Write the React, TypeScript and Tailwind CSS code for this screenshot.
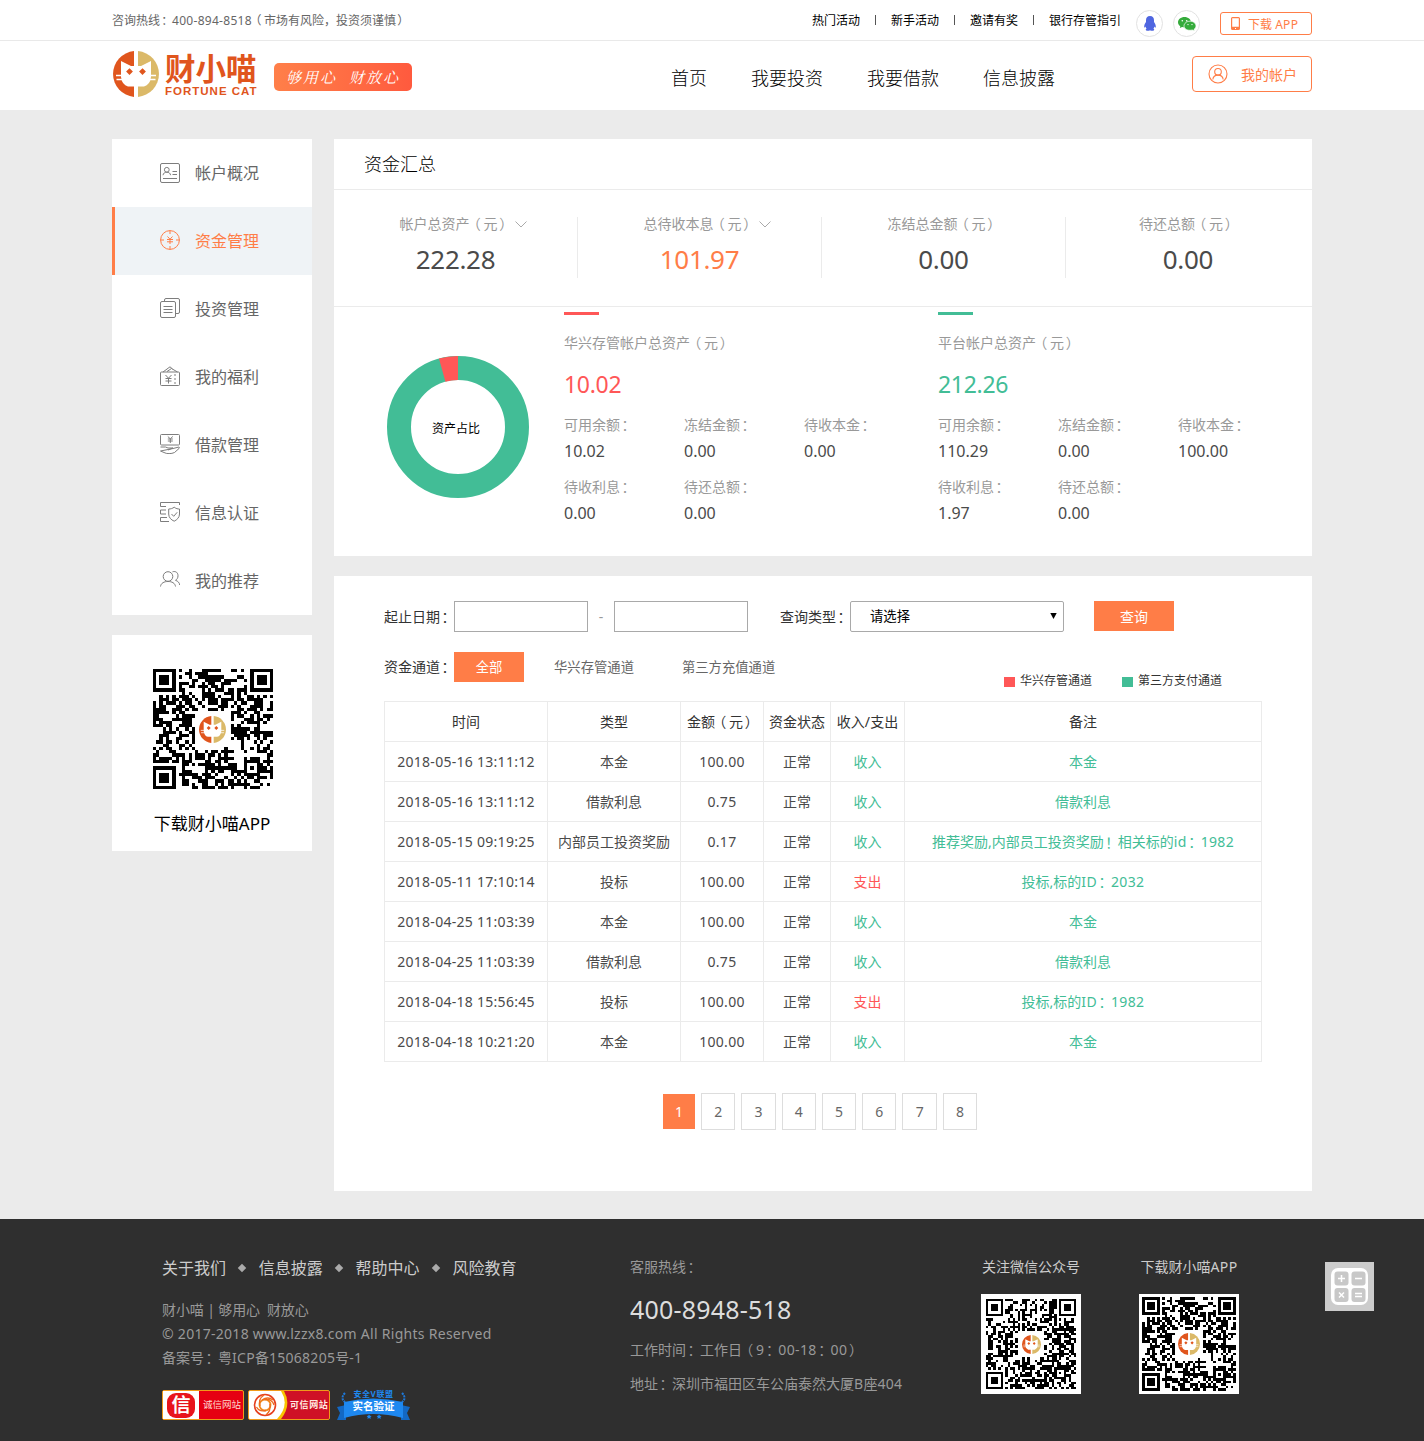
import React from "react";

const LATIN = /([A-Za-z0-9.©\-:\/][A-Za-z0-9.©\-:\/ ]*|[：！（）])/;

/* Mixed-script text: centred full-width punctuation and slightly tracked latin runs. */
function T({ children, tight = false }: { children: string; tight?: boolean }) {
  return (
    <>
      {children.split(LATIN).map((part, i) => {
        if (i % 2 === 0) return part;
        if (/[：！]/.test(part))
          return (
            <span
              key={i}
              className="inline-block h-[1em] -translate-x-[0.14em] translate-y-[0.06em] font-['Noto_Sans_CJK_TC','Noto_Sans_CJK_SC',sans-serif] leading-[1em]"
            >
              {part}
            </span>
          );
        if (part === "（")
          return (
            <span key={i} className="inline-block -translate-x-[0.2em] leading-[1em]">
              {part}
            </span>
          );
        if (part === "）")
          return (
            <span key={i} className="inline-block translate-x-[0.12em] leading-[1em]">
              {part}
            </span>
          );
        return (
          <span key={i} className={tight ? "tracking-[0.020em]" : "tracking-[0.024em]"}>
            {part}
          </span>
        );
      })}
    </>
  );
}

function CatMark({ className }: { className: string }) {
  return (
    <svg viewBox="0 0 46 46" className={className}>
      <path d="M21 0.090A23 23 0 0 0 21 45.910Z" fill="#e0551d" />
      <path d="M25 0.090A23 23 0 0 1 25 45.910Z" fill="#dbb968" />
      <path d="M8 10L18 15H28L38 10V26Q37 34 31 35.500H15Q9 34 8 26Z" fill="#fff" />
      <path d="M3 24.500H9M3.500 28.500H10M37 24.500H43M36 28.500H42.500" stroke="#fff" strokeWidth="1.300" />
      <path d="M16.500 17.200l3.400 3.400-3.400 3.400-3.400-3.400zM29.500 17.200l3.400 3.400-3.400 3.400-3.400-3.400z" fill="#e0551d" />
    </svg>
  );
}

const N = 37;
function buildQr(seed: number) {
  let s = seed;
  const rand = () => {
    s = (s * 1103515245 + 12345) % 2147483648;
    return s / 2147483648;
  };
  const ring = (x: number, y: number, cx: number, cy: number) => Math.max(Math.abs(x - cx), Math.abs(y - cy));
  let d = "";
  for (let y = 0; y < N; y++) {
    for (let x = 0; x < N; x++) {
      let on = rand() < 0.53;
      for (const [cx, cy] of [[3, 3], [N - 4, 3], [3, N - 4]]) {
        const r = ring(x, y, cx, cy);
        if (r <= 4) on = r <= 1 || r === 3;
      }
      const a = ring(x, y, N - 7, N - 7);
      if (a <= 2) on = a !== 1;
      if (x > 12 && x < 24 && y > 12 && y < 24) on = false;
      if (on) d += `M${x} ${y}h1v1h-1z`;
    }
  }
  return d;
}

function Qr({ seed, className, markClass }: { seed: number; className: string; markClass: string }) {
  return (
    <div className={`relative flex items-center justify-center bg-white ${className}`}>
      <svg viewBox={`0 0 ${N} ${N}`} className="h-full w-full" shapeRendering="crispEdges">
        <path d={buildQr(seed)} fill="#000" />
      </svg>
      <CatMark className={`absolute ${markClass}`} />
    </div>
  );
}

const menu: { label: string; icon: React.ReactNode }[] = [
  {
    label: "帐户概况",
    icon: (
      <>
        <rect x="0.5" y="0.5" width="19" height="19" rx="1.5" />
        <circle cx="6.8" cy="6.8" r="2.4" />
        <path d="M3 12.2c.3-2 1.8-3 3.8-3s3.500 1 3.800 3M12.500 8.500H17M12.500 11.500H17M3 15.500H17" />
      </>
    ),
  },
  {
    label: "资金管理",
    icon: (
      <>
        <circle cx="10" cy="10" r="9.400" />
        <path d="M10 .6V4M10 16v3.400M.6 10H4M16 10h3.400M7.500 6.500L10 9.200l2.500-2.700M10 9.200V14M7 9.500h6M7 11.800h6" />
      </>
    ),
  },
  {
    label: "投资管理",
    icon: (
      <>
        <path d="M4.500 3.500V2A1.500 1.500 0 0 1 6 .5H18A1.500 1.500 0 0 1 19.500 2V14A1.500 1.500 0 0 1 18 15.500H15.500" />
        <rect x="0.5" y="3.5" width="15" height="16" rx="1.5" />
        <path d="M3.500 8.500H12.500M3.500 11.500H12.500M3.500 14.500H12.500" />
      </>
    ),
  },
  {
    label: "我的福利",
    icon: (
      <>
        <rect x="0.5" y="6" width="19" height="13.500" rx="1" />
        <path d="M3 6L10 .8 12.500 3M7 5.500l4.500-3 6 3.500M15 8v2M15 12v2M15 16v2M5.500 9L8.500 12.200 11.500 9M8.500 12.200V17.500M5.500 12.500h6M5.500 15h6" />
      </>
    ),
  },
  {
    label: "借款管理",
    icon: (
      <>
        <rect x="0.5" y="0.5" width="19" height="10.500" rx="1" />
        <path d="M7.800 2.500L10.300 4.800 12.800 2.500M10.300 4.800V9M7.800 5h5M7.800 7h5M.5 13H5.500L8 14H13L8 16M13 14.500l6-1.500c.8.400.5.900 0 1.500L14.500 18.500c-3 1.500-8 1.500-10.500 0L.5 17Z" />
      </>
    ),
  },
  {
    label: "信息认证",
    icon: (
      <>
        <path d="M19.500 3V.5H.5V4.500H6M6 8H.5V12H6M7 15.500H.5V19.500H9M14.200 5.200c2 1.500 3.500 1.800 5.300 1.800v5c0 3.500-2.500 5.800-5.300 7.200C11 17.800 8.700 15.500 8.700 12V7c2 0 3.800-.5 5.500-1.800ZM11.500 12l2.200 2.300 3.500-4" />
      </>
    ),
  },
  {
    label: "我的推荐",
    icon: (
      <>
        <circle cx="8" cy="6.500" r="4.800" />
        <path d="M.5 16.500c.5-3.500 3.500-5 7.500-5s7 1.500 7.500 5M12.500 1.800c3.500-1 5.500 1 5.500 4 0 2-1 3.700-2.500 4.500 2.500.8 4 2.500 4.200 4.700" />
      </>
    ),
  },
];

const stats = [
  { label: "帐户总资产（元）", value: "222.28", arrow: true, color: "text-[#4a4a4a]" },
  { label: "总待收本息（元）", value: "101.97", arrow: true, color: "text-[#ff7d47]" },
  { label: "冻结总金额（元）", value: "0.00", arrow: false, color: "text-[#4a4a4a]" },
  { label: "待还总额（元）", value: "0.00", arrow: false, color: "text-[#4a4a4a]" },
];

const accounts = [
  {
    title: "华兴存管帐户总资产（元）",
    total: "10.02",
    bar: "bg-[#ff5757]",
    color: "text-[#ff5757]",
    items: [["可用余额：", "10.02"], ["冻结金额：", "0.00"], ["待收本金：", "0.00"], ["待收利息：", "0.00"], ["待还总额：", "0.00"]],
  },
  {
    title: "平台帐户总资产（元）",
    total: "212.26",
    bar: "bg-[#42bd96]",
    color: "text-[#42bd96]",
    items: [["可用余额：", "110.29"], ["冻结金额：", "0.00"], ["待收本金：", "100.00"], ["待收利息：", "1.97"], ["待还总额：", "0.00"]],
  },
];

const rows = [
  ["2018-05-16 13:11:12", "本金", "100.00", "收入", "本金"],
  ["2018-05-16 13:11:12", "借款利息", "0.75", "收入", "借款利息"],
  ["2018-05-15 09:19:25", "内部员工投资奖励", "0.17", "收入", "推荐奖励,内部员工投资奖励！相关标的id：1982"],
  ["2018-05-11 17:10:14", "投标", "100.00", "支出", "投标,标的ID：2032"],
  ["2018-04-25 11:03:39", "本金", "100.00", "收入", "本金"],
  ["2018-04-25 11:03:39", "借款利息", "0.75", "收入", "借款利息"],
  ["2018-04-18 15:56:45", "投标", "100.00", "支出", "投标,标的ID：1982"],
  ["2018-04-18 10:21:20", "本金", "100.00", "收入", "本金"],
];

function TopBar() {
  return (
    <div className="h-[41px] border-b border-[#e9e9e9] bg-white">
      <div className="mx-auto flex w-[1200px] items-start text-[12px] leading-5">
        <p className="mt-[11px] text-[#666]">
          <T>咨询热线：400-894-8518（市场有风险，投资须谨慎）</T>
        </p>
        <nav className="mt-[11px] ml-auto flex items-center text-black">
          {["热门活动", "新手活动", "邀请有奖", "银行存管指引"].map((t, i) => (
            <React.Fragment key={t}>
              {i > 0 && <span className="mx-[15px] mb-0.5 h-[10px] w-px bg-[#555]" />}
              <a>{t}</a>
            </React.Fragment>
          ))}
        </nav>
        <span className="mt-[10px] ml-[15px] flex h-[27px] w-[27px] items-center justify-center rounded-full border border-[#e2e2e2]">
          <svg viewBox="0 0 12 15" className="h-[15px] w-3" fill="#4f66e0">
            <path d="M6 0C3.200 0 2 2 2 4.200V6C.8 7.500 0 9.500.2 11.200c.3.600 1-.2 1.300-.8.200 1 .6 1.600 1.100 2.100-1 .4-1.300 1.800.2 2.200 1.200.3 2.500.1 3.200-.5.700.6 2 .8 3.200.5 1.500-.4 1.200-1.800.2-2.200.5-.5.900-1.100 1.100-2.100.3.600 1 1.400 1.300.8C12 9.500 11.200 7.500 10 6V4.200C10 2 8.800 0 6 0Z" />
          </svg>
        </span>
        <span className="mt-[10px] ml-[10px] flex h-[27px] w-[27px] items-center justify-center rounded-full border border-[#e2e2e2]">
          <svg viewBox="0 0 18 14" className="h-[14px] w-[18px]">
            <path d="M6.500 0C2.900 0 0 2.300 0 5.200c0 1.600.9 3 2.300 4L1.800 11l2.300-1.100c.8.200 1.600.3 2.400.3 3.600 0 6.500-2.200 6.500-5S10.100 0 6.500 0Z" fill="#35ab3b" />
            <path d="M12 4.200c3.300 0 6 2.100 6 4.700 0 1.500-.8 2.700-2 3.500l.4 1.600-2-1c-.8.200-1.500.3-2.400.3-3.300 0-6-1.900-6-4.400s2.700-4.700 6-4.700Z" fill="#35ab3b" stroke="#fff" strokeWidth=".7" />
            <circle cx="4.300" cy="3.700" r=".8" fill="#fff" />
            <circle cx="8.700" cy="3.700" r=".8" fill="#fff" />
            <circle cx="10" cy="7.600" r=".7" fill="#fff" />
            <circle cx="14" cy="7.600" r=".7" fill="#fff" />
          </svg>
        </span>
        <a className="mt-3 ml-[20px] flex h-[23px] w-[92px] items-center rounded-[3px] border border-[#ff7d47] pl-[10px] text-[#ff7d47]">
          <svg viewBox="0 0 9 13" className="mr-2 h-[13px] w-[9px]" fill="#ff7d47">
            <path fillRule="evenodd" d="M1.500 0h6A1.500 1.500 0 0 1 9 1.500v10A1.500 1.500 0 0 1 7.500 13h-6A1.500 1.500 0 0 1 0 11.500v-10A1.500 1.500 0 0 1 1.500 0ZM1.200 1.200v8.600h6.600V1.200ZM4 11v1h1v-1Z" />
          </svg>
          <span className="pt-0.5"><T>下载 APP</T></span>
        </a>
      </div>
    </div>
  );
}

function Header() {
  return (
    <header className="h-[69px] bg-white">
      <div className="mx-auto flex w-[1200px] items-start">
        <CatMark className="mt-[10px] ml-[1px] h-[46px] w-[46px]" />
        <div className="mt-[10px] ml-[6px] w-[92px] text-[#e0551d]">
          <div className="font-['Noto_Sans_CJK_SC',sans-serif] text-[30.500px] leading-[32px] font-bold whitespace-nowrap">财小喵</div>
          <div className="mt-[2px] font-['Liberation_Sans',sans-serif] text-[11.500px] leading-3 font-bold tracking-[1px] whitespace-nowrap">
            FORTUNE CAT
          </div>
        </div>
        <div className="mt-[22px] ml-[17px] flex h-7 w-[138px] items-center justify-center gap-3 rounded-[5px] bg-gradient-to-r from-[#ff7f49] to-[#ff5a3e] font-['Noto_Serif_CJK_SC','Noto_Sans_CJK_SC',serif] text-[15px] tracking-[2px] text-white italic">
          <span>够用心</span>
          <span>财放心</span>
        </div>
        <nav className="mt-[23px] ml-[259px] flex gap-[44px] text-[18px] leading-7 font-light text-black">
          {["首页", "我要投资", "我要借款", "信息披露"].map((t) => (
            <a key={t}>{t}</a>
          ))}
        </nav>
        <a className="mt-[15px] ml-auto flex h-9 w-[120px] items-center rounded-[4px] border border-[#ff7d47] pl-[15px] text-[14px] text-[#ff7d47]">
          <svg viewBox="0 0 20 20" className="mr-[13px] h-5 w-5" fill="none" stroke="#ff7d47" strokeWidth="1.1">
            <circle cx="10" cy="10" r="9" />
            <circle cx="10" cy="7.800" r="3.300" />
            <path d="M4.800 15.500c.3-2.800 2-4.400 5.200-4.400s4.900 1.600 5.200 4.400" />
          </svg>
          我的帐户
        </a>
      </div>
    </header>
  );
}

function Sidebar() {
  return (
    <aside className="w-[200px] shrink-0">
      <ul className="bg-white text-[16px] text-[#666]">
        {menu.map((m, i) => (
          <li
            key={m.label}
            className={
              i === 1
                ? "flex h-[68px] items-center border-l-[3px] border-[#ff7d47] bg-[#eff3f6] pl-[45px] text-[#ff7d47]"
                : "flex h-[68px] items-center pl-12"
            }
          >
            <svg viewBox="0 0 20 20" className={i === 0 ? "mr-[15px] h-5 w-5" : "-mt-0.5 mr-[15px] h-5 w-5"} fill="none" stroke={i === 1 ? "#ff7d47" : "#7d7d7d"}>
              {m.icon}
            </svg>
            {m.label}
          </li>
        ))}
      </ul>
      <div className="mt-5 flex h-[216px] flex-col items-center bg-white pt-[34px]">
        <Qr seed={77} className="ml-px h-[120px] w-[120px]" markClass="h-[27px] w-[27px]" />
        <p className="mt-[21px] text-[17px] leading-7 text-black">下载财小喵APP</p>
      </div>
    </aside>
  );
}

function Summary() {
  return (
    <section className="h-[417px] bg-white">
      <h2 className="h-[51px] border-b border-[#ebebeb] pl-[30px] text-[18px] leading-[50px] font-light text-black">资金汇总</h2>
      <div className="flex h-[117px] items-start border-b border-[#ebebeb] pt-[27px]">
        {stats.map((s, i) => (
          <div key={s.label} className={`h-[61px] w-[244px] text-center ${i < 3 ? "border-r border-[#ebebeb]" : ""}`}>
            <div className="h-[14px] text-[14px] leading-[14px] text-[#999]">
              <span className="relative inline-block">
                <T>{s.label}</T>
                {s.arrow && (
                  <svg viewBox="0 0 12 7" className="absolute top-[4px] left-full ml-[3px] h-[7px] w-3" fill="none" stroke="#aaa">
                    <path d="M.5 .5L6 6L11.500 .5" />
                  </svg>
                )}
              </span>
            </div>
            <div className={`mt-[11px] text-[26px] leading-[34px] tracking-[-0.3px] ${s.color}`}>{s.value}</div>
          </div>
        ))}
      </div>
      <div className="flex">
        <div className="relative mt-[49px] ml-[53px] h-[142px] w-[142px]">
          <svg viewBox="-71 -71 142 142" className="h-full w-full" fill="none" strokeWidth="24">
            <circle r="59" stroke="#42bd96" />
            <path d="M0 -59A59 59 0 0 0 -15.800 -56.840" stroke="#ff5757" />
          </svg>
          <span className="absolute inset-0 pr-1 text-center text-[12px] leading-[145px] text-black">资产占比</span>
        </div>
        <div className="mt-[5px] ml-[35px] flex">
          {accounts.map((a) => (
            <div key={a.title} className="w-[374px]">
              <div className={`h-[3px] w-[35px] ${a.bar}`} />
              <div className="mt-[18px] h-5 text-[14px] leading-5 text-[#999]">
                <T>{a.title}</T>
              </div>
              <div className={`mt-[16px] text-[23px] leading-[30px] tracking-[-0.3px] ${a.color}`}>{a.total}</div>
              <div className="mt-[13px] grid grid-cols-[120px_120px_120px] gap-y-[10px]">
                {a.items.map(([k, v]) => (
                  <div key={k}>
                    <div className="h-[26px] text-[14px] leading-[26px] text-[#999]">
                      <T>{k}</T>
                    </div>
                    <div className="text-[16px] leading-[26px] text-[#4a4a4a]">{v}</div>
                  </div>
                ))}
              </div>
            </div>
          ))}
        </div>
      </div>
    </section>
  );
}

function Records() {
  return (
    <section className="mt-5 h-[615px] bg-white px-[50px] pt-[25px] text-[14px] text-[#333]">
      <div className="flex h-[31px] items-center">
        <label className="h-[30px] w-[70px] pb-px leading-[29px] whitespace-nowrap">
          <T>起止日期：</T>
        </label>
        <div className="h-[31px] w-[134px] border border-[#a9a9a9]" />
        <span className="w-[26px] text-center text-[#999]">-</span>
        <div className="h-[31px] w-[134px] border border-[#a9a9a9]" />
        <label className="ml-8 h-[30px] w-[70px] pb-px leading-[29px] whitespace-nowrap">
          <T>查询类型：</T>
        </label>
        <div className="flex h-[31px] w-[214px] items-center justify-between rounded-[2px] border border-[#a9a9a9] pr-[6px] pl-[19px] text-[13.333px] text-black">
          <span className="pt-px">请选择</span>
          <svg viewBox="0 0 7 6" className="mb-px h-[6px] w-[7px]">
            <path d="M.3 0H6.700L3.500 6Z" fill="#000" />
          </svg>
        </div>
        <button className="mb-px ml-[30px] h-[30px] w-20 bg-[#ff7d47] text-white">查询</button>
      </div>
      <div className="mt-5 flex h-[49px] items-start leading-[30px]">
        <label className="w-[70px] whitespace-nowrap">
          <T>资金通道：</T>
        </label>
        <button className="h-[30px] w-[70px] bg-[#ff7d47] text-[13.333px] text-white">全部</button>
        <a className="ml-[30px] text-[13.333px] text-[#666]">华兴存管通道</a>
        <a className="ml-12 text-[13.333px] text-[#666]">第三方充值通道</a>
        <div className="mt-[19px] mr-10 ml-auto flex items-center text-[12px] leading-5">
          <span className="mt-0.5 mr-[5px] h-[10px] w-[11px] bg-[#ff5757]" />
          华兴存管通道
          <span className="mt-0.5 mr-[5px] ml-[30px] h-[10px] w-[11px] bg-[#42bd96]" />
          第三方支付通道
        </div>
      </div>
      <table className="w-[878px] table-fixed border-collapse text-center">
        <colgroup>
          <col className="w-[163px]" />
          <col className="w-[133px]" />
          <col className="w-[83px]" />
          <col className="w-[67px]" />
          <col className="w-[74px]" />
          <col />
        </colgroup>
        <thead>
          <tr className="h-10">
            {["时间", "类型", "金额（元）", "资金状态", "收入/支出", "备注"].map((h) => (
              <th key={h} className="border border-[#ebebeb] font-normal whitespace-nowrap">
                <T>{h}</T>
              </th>
            ))}
          </tr>
        </thead>
        <tbody>
          {rows.map((r, i) => (
            <tr key={i} className="h-10 text-[#4a4a4a]">
              <td className="border border-[#ebebeb] whitespace-nowrap">
                <T tight>{r[0]}</T>
              </td>
              <td className="border border-[#ebebeb] whitespace-nowrap">{r[1]}</td>
              <td className="border border-[#ebebeb]">
                <T tight>{r[2]}</T>
              </td>
              <td className="border border-[#ebebeb]">正常</td>
              <td className={`border border-[#ebebeb] ${r[3] === "支出" ? "text-[#ff5757]" : "text-[#42bd96]"}`}>{r[3]}</td>
              <td className="border border-[#ebebeb] text-[#42bd96]">
                <T>{r[4]}</T>
              </td>
            </tr>
          ))}
        </tbody>
      </table>
      <div className="mt-[31px] ml-[279px] flex items-center gap-[6px] text-[#666]">
        <span className="flex h-[35px] w-8 items-center justify-center bg-[#ff7d47] text-white">1</span>
        {["2", "3", "4", "5", "6", "7", "8"].map((n) => (
          <span key={n} className="flex h-[37px] w-[34.300px] items-center justify-center border border-[#ddd]">
            {n}
          </span>
        ))}
      </div>
    </section>
  );
}

function Badges() {
  return (
    <div className="mt-5 flex h-[30px]">
      <div className="flex w-[82px] items-center rounded-[2px] border border-[#f09a1a] bg-[#e60012]">
        <div className="flex h-full w-9 items-center justify-center bg-white">
          <span className="flex h-[25px] w-[28px] items-center justify-center rounded-[9px] bg-[#e8141c] text-[19px] leading-none font-bold text-white">信</span>
        </div>
        <span className="ml-1 text-[9.500px] whitespace-nowrap text-[#ffd9d0]">诚信网站</span>
      </div>
      <div className="relative ml-1 flex w-[82px] items-center overflow-hidden rounded-[2px] border border-[#f09a1a] bg-[#cf1126]">
        <svg viewBox="0 0 40 28" className="h-7 w-10 shrink-0" fill="none">
          <path d="M0 0H35Q43 14 32 28H0Z" fill="#f8c400" />
          <path d="M0 0H32Q41 14 28 28H0Z" fill="#fff" />
          <circle cx="16" cy="14" r="10.500" stroke="#e5401f" strokeWidth="1.600" />
          <circle cx="16" cy="14" r="5.500" stroke="#f08a1d" strokeWidth="1.800" />
          <path d="M16 8.500Q23 8 25 14M21 13Q22 20 17 24M17 19.500Q10 21 7.500 16M11 15Q9 8 15 4M13 9Q19 5 24 9" stroke="#ee6a1c" strokeWidth="1.300" />
        </svg>
        <span className="ml-px text-[9px] font-bold tracking-[0.600px] whitespace-nowrap text-[#ffe9e0]">可信网站</span>
      </div>
      <div className="relative ml-[7px] w-[73px]">
        <svg viewBox="0 0 73 30" className="h-full w-full">
          <path d="M0 17L9 15V30H0L3 23ZM73 17L64 15V30H73L70 23Z" fill="#1368c4" />
          <path d="M7 12Q36 5 66 12V28Q36 20 7 28Z" fill="#1e88f0" />
          <path d="M8 3Q3 8 8 12M65 3Q70 8 65 12" stroke="#1e78d8" strokeWidth="2" strokeDasharray="2 1" fill="none" />
          <path d="M32 24.500l1 1.300 1.600.2-1.200 1.200.3 1.700-1.700-.8-1.500.8.300-1.700-1.200-1.200 1.600-.2zM42 24.500l1 1.300 1.600.2-1.200 1.200.3 1.700-1.700-.8-1.500.8.300-1.700-1.200-1.200 1.600-.2z" fill="#1e88f0" />
        </svg>
        <span className="absolute inset-x-0 top-0 text-center text-[8px] leading-[8px] font-bold tracking-[0.600px] whitespace-nowrap text-[#1e88f0]">安全V联盟</span>
        <span className="absolute inset-x-0 top-[10px] text-center text-[10.500px] leading-[13px] font-bold whitespace-nowrap text-white">实名验证</span>
      </div>
    </div>
  );
}

function Footer() {
  return (
    <footer className="h-[222px] bg-[#2f2f2f] text-[14px] text-[#999]">
      <div className="mx-auto flex w-[1200px] items-start pl-[50px]">
        <div className="w-[468px] pt-[37px]">
          <div className="flex items-center text-[16px] leading-6 text-[#ccc]">
            {["关于我们", "信息披露", "帮助中心", "风险教育"].map((t, i) => (
              <React.Fragment key={t}>
                {i > 0 && <span className="mx-[13.400px] h-[6px] w-[6px] rotate-45 bg-[#aaa]" />}
                <a>{t}</a>
              </React.Fragment>
            ))}
          </div>
          <div className="mt-[18px] leading-6">
            <p className="tracking-[-0.120px] whitespace-pre">财小喵 | 够用心  财放心</p>
            <p><T tight>© 2017-2018 www.lzzx8.com All Rights Reserved</T></p>
            <p className="h-6"><T tight>备案号：粤ICP备15068205号-1</T></p>
          </div>
          <Badges />
        </div>
        <div className="w-[351px] pt-[38px] leading-5">
          <p className="h-5"><T>客服热线：</T></p>
          <p className="mt-[15px] text-[25px] leading-[34px] tracking-[0.200px] text-[#ddd]">400-8948-518</p>
          <p className="mt-[14px] h-5"><T>工作时间：工作日（9：00-18：00）</T></p>
          <p className="mt-[14px] h-5"><T tight>地址：深圳市福田区车公庙泰然大厦B座404</T></p>
        </div>
        <div className="flex gap-[58px] pt-[38px] leading-5 text-[#ccc]">
          <div className="flex w-[100px] flex-col items-center gap-[17px]">
            <span>关注微信公众号</span>
            <Qr seed={4021} className="h-[100px] w-[100px] p-[5px]" markClass="h-[19px] w-[19px]" />
          </div>
          <div className="flex w-[100px] flex-col items-center gap-[17px]">
            <span><T>下载财小喵APP</T></span>
            <Qr seed={77} className="h-[100px] w-[100px] p-[3px]" markClass="h-[22px] w-[22px]" />
          </div>
        </div>
      </div>
    </footer>
  );
}

export default function App() {
  return (
    <div className="relative h-[1441px] w-[1424px] overflow-hidden bg-[#ebebeb] font-['Noto_Sans','Noto_Sans_CJK_SC',sans-serif]">
      <TopBar />
      <Header />
      <main className="mx-auto flex h-[1109px] w-[1200px] items-start gap-[22px] pt-[29px]">
        <Sidebar />
        <div className="w-[978px]">
          <Summary />
          <Records />
        </div>
      </main>
      <Footer />
      <button className="absolute top-[1262px] left-[1325px] flex h-[49px] w-[49px] items-center justify-center bg-[#ccc]">
        <svg viewBox="0 0 37 37" className="h-[37px] w-[37px]" fill="none" stroke="#fff">
          <rect width="37" height="37" rx="7" fill="#fff" stroke="none" />
          <g fill="#c8c8c8" stroke="none">
            <rect x="3.500" y="3.500" width="14" height="14" rx="3" />
            <rect x="20.500" y="3.500" width="14" height="14" rx="3" />
            <rect x="3.500" y="20" width="14" height="14" rx="3" />
            <rect x="20.500" y="20" width="14" height="14" rx="3" />
          </g>
          <path d="M7 10.500h7M10.500 7v7M24 10.500h7M8 24.500l5 5M13 24.500l-5 5M24 25.500h7M24 28.500h7" strokeWidth="1.500" />
        </svg>
      </button>
    </div>
  );
}
